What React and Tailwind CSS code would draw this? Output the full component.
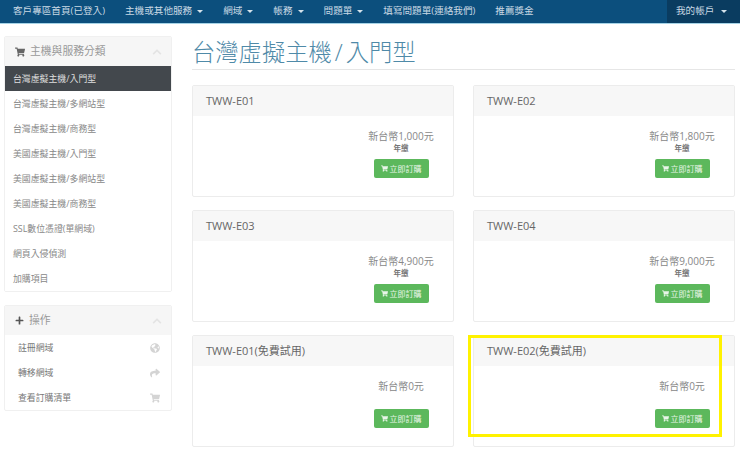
import React from 'react';
import { FaShoppingCart, FaPlus, FaChevronUp, FaGlobeAmericas, FaShare } from 'react-icons/fa';

const font = 'font-["Open_Sans","Noto_Sans_CJK_TC",sans-serif]';

const navItems = [
  { label: '客戶專區首頁(已登入)' },
  { label: '主機或其他服務', caret: true },
  { label: '網域', caret: true },
  { label: '帳務', caret: true },
  { label: '問題單', caret: true },
  { label: '填寫問題單(連絡我們)' },
  { label: '推薦獎金' },
];

const categories = [
  '台灣虛擬主機/入門型',
  '台灣虛擬主機/多網站型',
  '台灣虛擬主機/商務型',
  '美國虛擬主機/入門型',
  '美國虛擬主機/多網站型',
  '美國虛擬主機/商務型',
  'SSL數位憑證(單網域)',
  '網頁入侵偵測',
  '加購項目',
];

const actions = [
  { label: '註冊網域', icon: FaGlobeAmericas },
  { label: '轉移網域', icon: FaShare },
  { label: '查看訂購清單', icon: FaShoppingCart },
];

const plans = [
  { name: 'TWW-E01', price: '新台幣1,000元', cycle: '年繳' },
  { name: 'TWW-E02', price: '新台幣1,800元', cycle: '年繳' },
  { name: 'TWW-E03', price: '新台幣4,900元', cycle: '年繳' },
  { name: 'TWW-E04', price: '新台幣9,000元', cycle: '年繳' },
  { name: 'TWW-E01(免費試用)', price: '新台幣0元' },
  { name: 'TWW-E02(免費試用)', price: '新台幣0元' },
];

const Caret = () => (
  <span className="ml-[5px] inline-block h-0 w-0 border-x-[3px] border-t-[3px] border-x-transparent border-t-[#d5e3ec]" />
);

const PanelHeading = ({ icon: Icon, title, iconClass }) => (
  <div className="flex h-[29px] items-center bg-[#f6f6f6] pl-[10px] pr-[9px] text-[10.8px] text-[#999]">
    <Icon className={iconClass} />
    <span>{title}</span>
    <FaChevronUp className="ml-auto text-[10px] text-[#e4e4e4]" />
  </div>
);

const PlanCard = ({ plan }) => (
  <div className="h-[112px] rounded-[2px] border border-[#ececec] bg-white">
    <div className="flex h-[30px] items-center bg-[#f7f7f7] pl-[13px] text-[11px] text-[#666]">
      {plan.name}
    </div>
    <div className="ml-auto flex w-[104px] flex-col items-center pt-[13px]">
      <div className="h-[15px] text-[10px] leading-[15px] text-[#888]">{plan.price}</div>
      <div className="h-[15px] text-[7.5px] font-bold leading-[9px] text-[#777]">{plan.cycle}</div>
      <button className="flex h-[19px] w-[55px] items-center justify-center gap-[2px] rounded-[2px] bg-[#5cb85c] text-[8px] text-[#e9f5e9]">
        <FaShoppingCart className="text-[7px]" />
        立即訂購
      </button>
    </div>
  </div>
);

export default function App() {
  return (
    <div className={`${font} relative h-[449px] w-[740px] overflow-hidden bg-white`}>
      <nav className="flex h-6 border-b border-[#a5d3e6] bg-[#0c4f7d] text-[9.6px] text-[#c9d9e4]">
        <div className="flex">
          {navItems.map((item) => (
            <a key={item.label} className="flex items-center px-[10px] first:pl-[13px]">
              {item.label}
              {item.caret && <Caret />}
            </a>
          ))}
        </div>
        <a className="ml-auto flex w-[73px] items-center gap-[2px] bg-[#0a3c60] pl-[9px]">
          我的帳戶
          <Caret />
        </a>
      </nav>

      <div className="flex gap-5 pl-1 pr-[5px] pt-3">
        <aside className="flex w-[168px] shrink-0 flex-col gap-[13px]">
          <div className="overflow-hidden rounded-[2px] border border-[#f0f0f0]">
            <PanelHeading icon={FaShoppingCart} title="主機與服務分類" iconClass="mr-[5px] text-[10px] text-[#666]" />
            {categories.map((c, i) => (
              <div
                key={c}
                className={`flex h-[25px] items-center pl-[8px] text-[8.9px] ${i === 0 ? 'bg-[#43484d] text-[#dedede]' : 'bg-white text-[#888]'}`}
              >
                {c}
              </div>
            ))}
          </div>
          <div className="overflow-hidden rounded-[2px] border border-[#f0f0f0]">
            <PanelHeading icon={FaPlus} title="操作" iconClass="mr-[5px] text-[9px] text-[#555]" />
            {actions.map((a) => (
              <div key={a.label} className="flex h-[25px] items-center pl-[13px] pr-[11px] text-[8.9px] text-[#777]">
                {a.label}
                <a.icon className="ml-auto text-[10px] text-[#d4d4d4]" />
              </div>
            ))}
          </div>
        </aside>

        <main className="min-w-0 flex-1">
          <h1 className="h-[34px] border-b border-[#e6e6e6] text-[23.3px] font-light leading-[33px] text-[#4f8aa8]">
            台灣虛擬主機<span className="mx-[3px]">/</span>入門型
          </h1>
          <div className="mt-[15px] grid grid-cols-2 gap-x-[19px] gap-y-[13px]">
            {plans.map((p) => (
              <PlanCard key={p.name} plan={p} />
            ))}
          </div>
        </main>
      </div>

      {/* yellow highlight drawn over the last card */}
      <div className="absolute left-[468px] top-[335px] h-[102px] w-[254px] border-[3px] border-[#fff200]" />
    </div>
  );
}
